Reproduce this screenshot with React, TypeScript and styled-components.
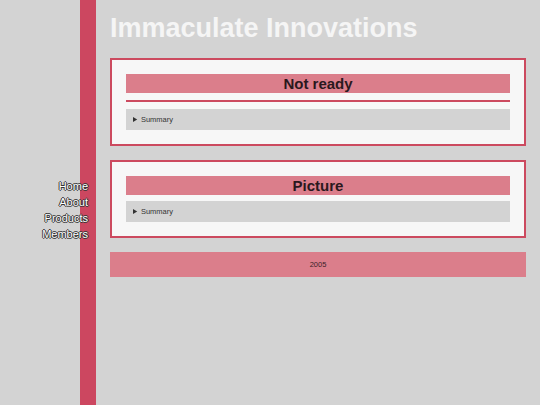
import React from "react";
import styled, { createGlobalStyle } from "styled-components";

const Global = createGlobalStyle`
  html, body { margin: 0; padding: 0; background: #d3d3d3; }
  body { font-family: "Liberation Sans", Arial, sans-serif; }
`;

const Page = styled.div`
  display: flex;
  min-height: 405px;
`;

const Aside = styled.aside`
  width: 96px;
  flex: none;
  background: linear-gradient(to right, transparent 80px, #cc4760 80px);
  display: flex;
  flex-direction: column;
  align-items: flex-end;
  padding-top: 178px;
  box-sizing: border-box;
  padding-right: 8px;
`;

const NavLink = styled.a`
  display: block;
  font-size: 11px;
  line-height: 16px;
  color: #ffffff;
  text-decoration: none;
  text-shadow: -1px 0 #333, 1px 0 #333, 0 -1px #333, 0 1px #333;
`;

const Main = styled.main`
  flex: 1;
  padding: 0 14px 0 14px;
`;

const Title = styled.h1`
  margin: 12px 0 0;
  font-size: 27px;
  line-height: 32px;
  font-weight: bold;
  color: #f5f5f5;
`;

const Card = styled.section`
  margin-top: 14px;
  border: 2px solid #cc4a5f;
  background: #f7f7f7;
  padding: 14px;
  display: flex;
  flex-direction: column;
`;

const Heading = styled.h2`
  margin: 0;
  background: #db7e8b;
  color: #2a181d;
  font-size: 15px;
  line-height: 19px;
  font-weight: bold;
  text-align: center;
`;

const Rule = styled.hr`
  margin: 7px 0;
  border: none;
  height: 2px;
  background: #cc4a5f;
`;

const Details = styled.details<{ $gap?: boolean }>`
  margin-top: ${(p) => (p.$gap ? "6px" : "0")};
  background: #d3d3d3;
  font-size: 7.5px;
  color: #333;
`;

const Summary = styled.summary`
  padding: 6px 7px;
  line-height: 9px;
  cursor: pointer;
`;

const Footer = styled.footer`
  margin-top: 14px;
  height: 25px;
  background: #db7e8b;
  display: flex;
  align-items: center;
  justify-content: center;
  font-size: 7.5px;
  color: #3a2228;
`;

export default function App() {
  return (
    <>
      <Global />
      <Page>
        <Aside>
          <NavLink href="#">Home</NavLink>
          <NavLink href="#">About</NavLink>
          <NavLink href="#">Products</NavLink>
          <NavLink href="#">Members</NavLink>
        </Aside>
        <Main>
          <Title>Immaculate Innovations</Title>
          <Card>
            <Heading>Not ready</Heading>
            <Rule />
            <Details>
              <Summary>Summary</Summary>
            </Details>
          </Card>
          <Card>
            <Heading>Picture</Heading>
            <Details $gap>
              <Summary>Summary</Summary>
            </Details>
          </Card>
          <Footer>2005</Footer>
        </Main>
      </Page>
    </>
  );
}
